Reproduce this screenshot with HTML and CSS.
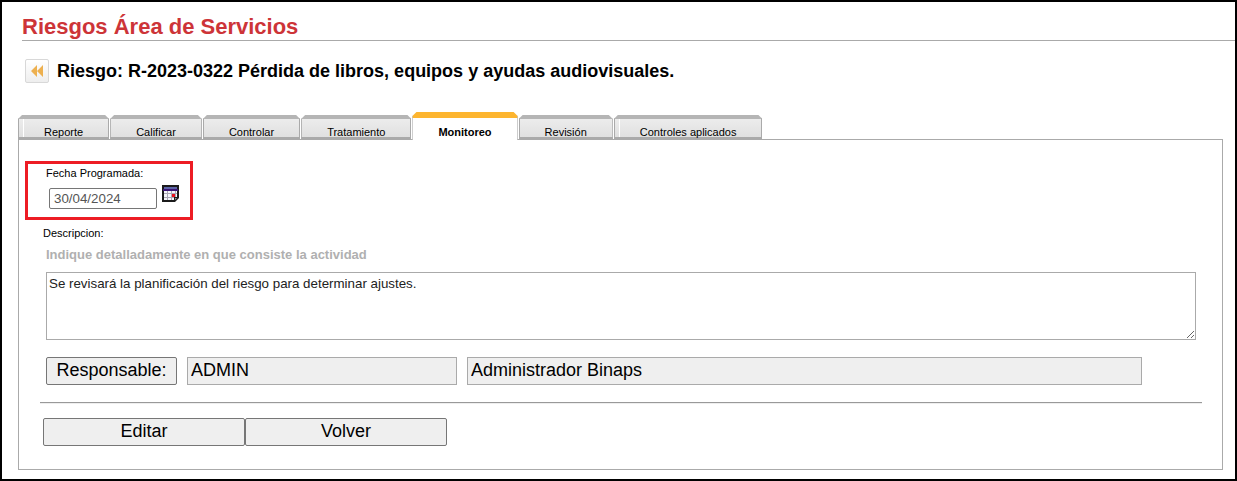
FILE: index.html
```html
<!DOCTYPE html>
<html lang="es">
<head>
  <meta charset="UTF-8">
  <meta name="viewport" content="width=device-width, initial-scale=1">
  <title>Riesgos Área de Servicios</title>
  <link rel="stylesheet" href="styles.css">
</head>
<body>

<header>
  <h1>Riesgos Área de Servicios</h1>
  <div class="heading">
    <a class="back" href="#" aria-label="Atrás">
      <svg width="12" height="12" viewBox="0 0 12 12">
        <path d="M6 0v12L0 6zM12 0v12L6 6z" fill="#edb04f"/>
      </svg>
    </a>
    <h2>Riesgo: R-2023-0322 Pérdida de libros, equipos y ayudas audiovisuales.</h2>
  </div>
</header>

<main>
  <nav class="tabs">
    <a class="tab split" href="#">Reporte</a>
    <a class="tab" href="#">Calificar</a>
    <a class="tab" href="#">Controlar</a>
    <a class="tab" href="#">Tratamiento</a>
    <a class="tab active" href="#">Monitoreo</a>
    <a class="tab" href="#">Revisión</a>
    <a class="tab split" href="#">Controles aplicados</a>
  </nav>

  <form class="panel">
    <div class="date-box">
      <label for="fecha">Fecha Programada:</label>
      <div class="date-row">
        <input type="text" id="fecha" value="30/04/2024">
        <button type="button" class="calendar" aria-label="Calendario">
          <svg width="17" height="17" viewBox="0 0 17 17">
            <path d="M0 0h17v13l-4 4H0z" fill="#1b1b1b"/>
            <path d="M2 2h13v2H2z" fill="#5d66a8"/>
            <path d="M1 4h15v2H1z" fill="#3c1675"/>
            <path d="M2 6h13v6h-3v3H2z" fill="#f6f6fa"/>
            <path d="M5 6h1v9H5zM9 6h1v9H9zM13 6h1v6h-1zM2 8h13v1H2zM2 12h10v1H2z" fill="#aaa8b5"/>
            <path d="M10 9h3v3h-3z" fill="#e8131c"/>
            <path d="M13 13h2l-2 2z" fill="#999"/>
          </svg>
        </button>
      </div>
    </div>

    <label class="desc-label" for="descripcion">Descripcion:</label>
    <p class="hint">Indique detalladamente en que consiste la actividad</p>
    <textarea id="descripcion">Se revisará la planificación del riesgo para determinar ajustes.</textarea>

    <div class="responsible">
      <button type="button">Responsable:</button>
      <input type="text" value="ADMIN" aria-label="Usuario" readonly>
      <input type="text" value="Administrador Binaps" aria-label="Nombre" readonly>
    </div>

    <hr>

    <div class="actions">
      <button type="button">Editar</button>
      <button type="button">Volver</button>
    </div>
  </form>
</main>

</body>
</html>
```

FILE: styles.css
```css
* {
  box-sizing: border-box;
}

body {
  margin: 0;
  min-height: 100vh;
  border: 2px solid #000;
  background: #fff;
  color: #000;
  font-family: "Liberation Sans", Arial, sans-serif;
}

h1 {
  margin: 12px 0 0 20px;
  padding-bottom: 1px;
  border-bottom: 1px solid #aaa;
  color: #cd3438;
  font-size: 22px;
  line-height: 25px;
}

.heading {
  display: flex;
  align-items: center;
  gap: 8px;
  margin: 17px 0 0 23px;
}

.back {
  display: flex;
  align-items: center;
  justify-content: center;
  width: 24px;
  height: 24px;
  border: 1px solid #d8d8d8;
  border-radius: 2px;
  background: linear-gradient(#fff, #eee);
}

h2 {
  margin: 0;
  font-size: 18px;
  line-height: 26px;
}

main {
  margin: 28px 12px 0 16px;
}

/* Tabs */
.tabs {
  display: flex;
  align-items: flex-end;
  gap: 1px;
}

.tab {
  height: 24px;
  padding: 7px 25px 0;
  border: 1px solid #aaa;
  border-top: 4px solid #b5b5b5;
  border-bottom: 2px solid #aaa;
  background: linear-gradient(#ececec, #e0e0e0);
  clip-path: polygon(4px 0, calc(100% - 4px) 0, 100% 4px, 100% 100%, 0 100%, 0 4px);
  color: #000;
  font-size: 11px;
  line-height: 12px;
  text-decoration: none;
}

.split {
  background: linear-gradient(#fff, #fff) 4px 0 / 1px 100% no-repeat, linear-gradient(#ececec, #e0e0e0);
}

.active {
  z-index: 1;
  height: 28px;
  margin-bottom: -1px;
  padding-top: 8px;
  border-top: 6px solid #fdb52f;
  border-bottom: 0;
  background: #fff;
  font-weight: bold;
}

/* Form */
.panel {
  padding: 21px 20px 23px 6px;
  border: 1px solid #aaa;
}

.date-box {
  width: 168px;
  padding: 3px 10px 8px 18px;
  border: 3px solid #ed1c24;
}

.date-box label,
.desc-label {
  display: block;
  font-size: 11px;
  line-height: 12px;
}

.date-row {
  display: flex;
  gap: 5px;
  margin: 9px 0 0 3px;
}

.date-row input {
  width: 108px;
  height: 21px;
  padding: 1px 4px;
  border: 1px solid #767676;
  border-radius: 2px;
  color: #555;
  font-family: inherit;
}

.calendar {
  height: 17px;
  margin-top: -3px;
  padding: 0;
  border: 0;
  background: none;
}

.desc-label {
  margin: 7px 0 0 18px;
}

.hint {
  margin: 8px 0 9px 21px;
  color: #b0b0b0;
  font-size: 13px;
  font-weight: bold;
  line-height: 16px;
}

textarea {
  display: block;
  width: calc(100% - 27px);
  height: 68px;
  margin-left: 21px;
  padding: 3px 2px;
  border: 1px solid #aaa;
  color: #222;
  font-family: inherit;
}

.responsible {
  display: grid;
  grid-template-columns: 131px 270px 1fr;
  gap: 10px;
  margin: 17px 60px 17px 21px;
}

.responsible input,
.responsible button,
.actions button {
  height: 28px;
  background: #efefef;
  color: #000;
  font-family: inherit;
  font-size: 18px;
}

.responsible input {
  min-width: 0;
  padding: 0 3px 2px;
  border: 1px solid #aaa;
}

.responsible button,
.actions button {
  padding: 0 0 2px;
  border: 1px solid #767676;
  border-radius: 2px;
}

hr {
  margin: 0 0 0 15px;
  border: 0;
  border-top: 1px solid #999;
  border-bottom: 1px solid #eee;
}

.actions {
  display: flex;
  margin: 14px 0 0 18px;
}

.actions button {
  width: 202px;
}
```
